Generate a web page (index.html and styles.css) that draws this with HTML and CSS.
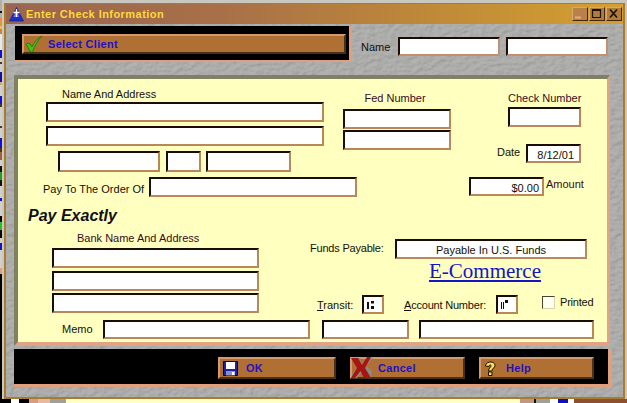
FILE: index.html
```html
<!DOCTYPE html>
<html lang="en">
<head>
<meta charset="utf-8">
<title>Enter Check Information</title>
<link rel="stylesheet" href="styles.css">
</head>
<body>
<div class="desk">
  <div class="window">
    <header class="titlebar">
      <svg class="title-icon" viewBox="0 0 15 15" width="15" height="15"><path d="M7.5 0.5 L14.5 14 H0.5 Z" fill="#1c30c8" stroke="#10106a" stroke-width=".6"/><path d="M7.5 2 L4.5 10 H10 Z" fill="#6a7cf0"/><path d="M7.5 2 V10 M4.5 5.5 H10.5" stroke="#fff" stroke-width="1.3" fill="none"/></svg>
      <span class="title-text">Enter Check Information</span>
      <div class="winctl">
        <span class="ctl ctl-min"><svg viewBox="0 0 15 13" width="15" height="13"><path d="M3 10.5 H9" stroke="#e8b070" stroke-width="2"/></svg></span>
        <span class="ctl"><svg viewBox="0 0 15 13" width="15" height="13"><path d="M3.5 2.5 H11.5 V10.5 H3.5 Z M3.5 3.5 H11.5" stroke="#1a1008" stroke-width="1.2" fill="none"/></svg></span>
        <span class="ctl ctl-close"><svg viewBox="0 0 15 13" width="15" height="13"><path d="M4 2.5 L11 10.5 M11 2.5 L4 10.5" stroke="#1a1008" stroke-width="1.6" fill="none"/></svg></span>
      </div>
    </header>
    <div class="content">
      <div class="toprow">
        <div class="selectbar">
          <button class="btn btn-select" type="button">
            <svg class="check" viewBox="0 0 18 18" width="18" height="18"><path d="M1 9 L4 8 L7 12 C9 7 13 3 17 1 C13 5 9.5 11 7.5 17 H5.5 Z" fill="#3fc60f" stroke="#1a6a08" stroke-width=".7"/></svg>
            <span>Select Client</span>
          </button>
        </div>
        <label class="label name-label">Name</label>
        <input class="field f-name" type="text">
        <input class="field f-name" type="text">
      </div>
      <main class="panel">
        <section class="block1">
          <div class="col-addr">
            <div class="label addr-label">Name And Address</div>
            <input class="field f-wide" type="text">
            <input class="field f-wide second" type="text">
            <div class="cityrow">
              <input class="field f-city" type="text">
              <input class="field f-state" type="text">
              <input class="field f-zip" type="text">
            </div>
          </div>
          <div class="col-fed">
            <div class="label maroon fed-label">Fed Number</div>
            <input class="field f-fed" type="text">
            <input class="field f-fed fed2" type="text">
          </div>
          <div class="col-check">
            <div class="label maroon check-label">Check Number</div>
            <input class="field f-check" type="text">
            <div class="daterow">
              <span class="label date-label">Date</span>
              <input class="field f-date" type="text" value="8/12/01">
            </div>
          </div>
        </section>
        <section class="payrow">
          <span class="label pay-label">Pay To The Order Of</span>
          <input class="field f-pay" type="text">
          <input class="field f-amount" type="text" value="$0.00">
          <span class="label maroon amount-label">Amount</span>
        </section>
        <h2 class="exact">Pay Exactly</h2>
        <section class="block4">
          <div class="col-bank">
            <div class="label maroon bank-label">Bank Name And Address</div>
            <input class="field f-bank" type="text">
            <input class="field f-bank b2" type="text">
            <input class="field f-bank b3" type="text">
          </div>
          <div class="col-funds">
            <div class="fundsrow">
              <span class="label tight">Funds Payable:</span>
              <input class="field f-funds" type="text" value="Payable In U.S. Funds">
            </div>
            <a class="ecom" href="#">E-Commerce</a>
            <div class="routerow">
              <span class="label transit-label"><u>T</u>ransit:</span>
              <span class="field micr"><svg viewBox="0 0 18 15" width="18" height="15"><path d="M4 5 H6 V12 H4 Z M8 4 H11 V6.500 H8 Z M8 9 H11 V12 H8 Z" fill="#111"/></svg></span>
              <span class="label acct-label tight"><u>A</u>ccount Number:</span>
              <span class="field micr"><svg viewBox="0 0 18 15" width="18" height="15"><path d="M4 5 H5 V12 H4 Z M6 5 H7 V12 H6 Z M8 3 H11 V6 H8 Z" fill="#111"/></svg></span>
              <span class="printed"><span class="box"></span><span class="label tight">Printed</span></span>
            </div>
          </div>
        </section>
        <section class="memorow">
          <span class="label memo-label">Memo</span>
          <input class="field f-memo" type="text">
          <input class="field f-memo2" type="text">
          <input class="field f-memo3" type="text">
        </section>
      </main>
      <footer class="actionbar">
        <button class="btn btn-ok" type="button">
          <svg viewBox="0 0 15 15" width="15" height="15"><path d="M0.500 0.500 H14.500 V14.500 H0.500 Z" fill="#2020a0" stroke="#000048"/><path d="M3 1 H12 V8 H3 Z" fill="#fff"/><path d="M3 10 H12 V14.500 H3 Z" fill="#8890c8"/><path d="M9 11 H11.500 V14 H9 Z" fill="#fff"/></svg>
          <span>OK</span>
        </button>
        <button class="btn btn-cancel" type="button">
          <svg viewBox="0 0 22 22" width="22" height="22"><path d="M6 21 L13 13 L20 21 L21 14 L15 9 L22 1 L15 2 L11 7 L9 1 L2 1 L7 10 L1 17 L1 21 Z" fill="#8a8a80"/><path d="M0 1 H7 L11 8 L16 0 H20 L14 11 L20 21 H13 L9.500 14 L4 21 H0 L6 11 Z" fill="#a81410"/></svg>
          <span>Cancel</span>
        </button>
        <button class="btn btn-help" type="button">
          <svg viewBox="0 0 12 15" width="12" height="15"><path d="M1.500 5 C1.500 0 11 -0.500 11 4.500 C11 7 8 7 8 10 H4.500 C4.500 6.500 7.500 6.500 7 4.500 C6.500 3.500 5 4 5 5.500 Z M4.500 11 H8 V14.500 H4.500 Z" fill="#f8e050" stroke="#1a1000" stroke-width="1"/></svg>
          <span>Help</span>
        </button>
      </footer>
    </div>
  </div>
</div>
</body>
</html>
```
FILE: styles.css
```css
* { box-sizing: border-box; }
html, body { margin: 0; padding: 0; }
body { width: 627px; height: 403px; overflow: hidden; background: #ffffc8; }
.desk {
  position: relative;
  width: 627px;
  height: 403px;
  padding: 3px 2px 4px 4px;
  font-family: "Liberation Sans", Arial, sans-serif;
  background:
    linear-gradient(to bottom,
      #b0b0a8 0 11px, #101010 11px 13px, #b0b0a8 13px 18px, #e89040 18px 26px, #f0c050 26px 29px, #d08040 29px 34px, #e8e8e8 34px 50px, #1010d0 50px 58px,
      #d0d0d0 58px 62px, #503020 62px 64px, #d0d0d0 64px 72px, #1010a0 72px 82px, #e0a080 82px 85px, #d0d0d0 85px 96px, #1010d0 96px 104px, #503020 104px 107px,
      #d0d0d0 107px 126px, #503020 126px 128px, #d0d0d0 128px 138px, #1010d0 138px 148px, #503020 148px 152px, #a06040 152px 160px, #d0d0d0 160px 166px, #101010 166px 172px, #20a020 172px 180px, #101010 180px 186px,
      #d0d0d0 186px 198px, #1010d0 198px 201px, #d0d0d0 201px 216px, #000 216px 222px, #20c020 222px 230px, #000 230px 238px, #d0d0d0 238px 243px,
      #1010d0 243px 250px, #d0d0d0 250px 268px, #e0a080 268px 274px, #000 274px 403px) left top / 2px 403px no-repeat,
    linear-gradient(to right,
      #000 0 11px, #fff 11px 19px, #000 19px 29px, #d89c80 29px 38px, #e8b8a0 38px 50px, #a0a098 50px 66px, #ffffc8 66px 520px,
      #c09880 520px 534px, #101010 534px 536px, #a0a098 536px 550px, #fff 550px 558px, #1010c0 558px 568px, #fff 568px 574px, #8c5030 574px 627px) left bottom / 627px 4px no-repeat,
    #c8c8c0;
}
.window {
  width: 621px;
  height: 396px;
  border: 2px solid #a87c30;
  border-top-width: 1px;
  display: flex;
  flex-direction: column;
}
.titlebar {
  height: 20px;
  flex: none;
  display: flex;
  align-items: center;
  padding: 0 1px 0 3px;
  background: linear-gradient(to right, #9a6650 0%, #a87048 35%, #c08a38 70%, #d4a030 100%);
}
.title-icon { flex: none; }
.title-text {
  margin-left: 2px;
  color: #ffd83c;
  font-size: 11px;
  font-weight: bold;
  letter-spacing: .45px;
  white-space: nowrap;
}
.winctl { margin-left: auto; display: flex; gap: 1px; }
.ctl {
  display: block;
  width: 16px;
  height: 14px;
  background: #b07c38;
  border: 1px solid;
  border-color: #d8a868 #402810 #402810 #d8a868;
  overflow: hidden;
}
.ctl svg { display: block; margin: -1px 0 0 -1px; }
.ctl-min { background: #b8804a; }
.content {
  flex: 1;
  padding: 2px 0 0 9px;
  background-color: #a6a6a4;
  background-image: url("data:image/svg+xml,%3Csvg xmlns='http://www.w3.org/2000/svg' width='240' height='240'%3E%3Cfilter id='n' x='0' y='0' width='100%25' height='100%25'%3E%3CfeTurbulence type='fractalNoise' baseFrequency='.14 .24' numOctaves='2' seed='4' stitchTiles='stitch'/%3E%3CfeDiffuseLighting surfaceScale='1.1' lighting-color='%23b4b4b2' diffuseConstant='1'%3E%3CfeDistantLight azimuth='225' elevation='66'/%3E%3C/feDiffuseLighting%3E%3C/filter%3E%3Crect width='240' height='240' filter='url(%23n)'/%3E%3C/svg%3E");
}
.label {
  font-size: 11px;
  line-height: 13px;
  color: #141008;
  white-space: nowrap;
}
.tight { letter-spacing: -.2px; }
.maroon { color: #3a0a20; }
.field {
  display: block;
  flex: none;
  height: 20px;
  margin: 0;
  padding: 2px 3px 0;
  background: #fff;
  border: 2px solid;
  border-color: #180c04 #b88858 #b88858 #180c04;
  border-radius: 0;
  outline: 0;
  font: 11px "Liberation Sans", Arial, sans-serif;
  color: #141008;
}
.btn {
  display: flex;
  align-items: center;
  margin: 0;
  padding: 0;
  background: #b07034;
  border: 2px solid;
  border-color: #d49a6c #4a3018 #4a3018 #d49a6c;
  font: bold 11px "Liberation Sans", Arial, sans-serif;
  letter-spacing: .3px;
  color: #2210c4;
  text-align: left;
}
.btn svg { flex: none; display: block; }
.toprow { display: flex; align-items: flex-start; height: 49px; }
.selectbar {
  width: 337px;
  height: 36px;
  padding: 8px 3px 6px 7px;
  background: #000;
  border-right: 3px solid #e0a080;
  border-bottom: 2px solid #e0a080;
}
.btn-select { width: 324px; height: 20px; padding-left: 1px; }
.btn-select span { margin-left: 5px; }
.check { margin-top: -1px; }
.name-label { width: 28px; margin: 15px 0 0 9px; }
.f-name { width: 102px; height: 19px; margin-top: 11px; border-color: #180c04 #c09070 #c09070 #180c04; }
.name-label + .f-name { margin-left: 9px; margin-right: 6px; }

.panel {
  width: 596px;
  height: 271px;
  margin-left: -1px;
  background: #ffffc0;
  border-style: solid;
  border-width: 4px 3px 4px 4px;
  border-color: #808062 #e2a284 #e2a284 #808062;
}
.block1 { display: flex; height: 93px; }
.col-addr { width: 278px; margin-left: 28px; padding-top: 9px; }
.addr-label { margin: 0 0 1px 16px; }
.f-wide { width: 278px; }
.second { margin-top: 4px; }
.cityrow { display: flex; margin: 5px 0 0 12px; }
.cityrow .field { height: 21px; }
.f-city { width: 102px; }
.f-state { width: 35px; margin-left: 6px; }
.f-zip { width: 85px; margin-left: 5px; }
.col-fed { width: 108px; margin-left: 19px; padding-top: 13px; }
.fed-label { text-align: center; margin-bottom: 4px; margin-left: -4px; }
.f-fed { width: 108px; }
.fed2 { margin-top: 1px; }
.col-check { width: 84px; margin-left: 46px; padding-top: 13px; display: flex; flex-direction: column; align-items: flex-end; }
.check-label { width: 73px; margin-bottom: 2px; }
.f-check { width: 73px; }
.daterow { display: flex; align-items: center; gap: 6px; margin-top: 17px; width: 84px; }
.date-label { margin-bottom: 2px; width: 23px; }
.f-date { width: 55px; height: 19px; text-align: right; padding-right: 5px; }

.payrow { display: flex; align-items: flex-start; margin-top: 5px; height: 20px; padding-left: 25px; }
.pay-label { width: 106px; padding-top: 6px; }
.f-pay { width: 208px; }
.f-amount { width: 75px; height: 19px; margin-left: 112px; text-align: right; padding-right: 3px; }
.amount-label { margin: 1px 0 0 2px; }

.exact { margin: 9px 0 0 10px; height: 22px; font-size: 16px; line-height: 20px; font-weight: bold; font-style: italic; color: #101010; }
.block4 { display: flex; height: 82px; margin-top: 3px; }
.col-bank { width: 207px; margin-left: 34px; }
.bank-label { margin: 1px 0 3px 25px; }
.f-bank { width: 207px; }
.b2 { margin-top: 3px; }
.b3 { margin-top: 2px; }
.col-funds { margin: 8px 0 0 51px; width: 290px; display: flex; flex-direction: column; }
.fundsrow { display: flex; align-items: flex-start; }
.fundsrow .label { width: 85px; padding-top: 3px; }
.f-funds { width: 192px; text-align: center; }
.ecom {
  display: block;
  margin: 1px 0 0 119px;
  font: 21px/23px "Liberation Serif", "Times New Roman", serif;
  color: #1414c8;
  white-space: nowrap;
}
.routerow { display: flex; align-items: flex-start; height: 21px; margin-top: 12px; }
.transit-label { margin: 4px 0 0 7px; width: 45px; }
.micr { width: 22px; height: 19px; padding: 0; }
.micr svg { display: block; margin-left: -1px; }
.acct-label { margin: 4px 0 0 20px; width: 92px; }
.printed { display: flex; align-items: center; margin: 1px 0 0 24px; }
.box { display: block; width: 13px; height: 13px; background: #fffff0; border: 1px solid; border-color: #504030 #e0d0b0 #e0d0b0 #504030; margin-right: 5px; }

.memorow { display: flex; align-items: flex-start; margin-top: 7px; padding-left: 44px; }
.memo-label { width: 41px; padding-top: 3px; }
.memorow .field { height: 19px; }
.f-memo { width: 207px; }
.f-memo2 { width: 87px; margin-left: 12px; }
.f-memo3 { width: 175px; margin-left: 10px; }

.actionbar {
  width: 598px;
  height: 38px;
  margin: 3px 0 0 -1px;
  padding: 8px 14px 0 0;
  display: flex;
  justify-content: flex-end;
  align-items: flex-start;
  gap: 14px;
  background: #000;
  border-right: 4px solid #e0a080;
  border-bottom: 3px solid #e0a080;
}
.actionbar .btn { height: 22px; width: 115px; }
.btn-ok { width: 118px !important; padding-left: 3px; }
.btn-ok span { margin-left: 8px; }
.btn-cancel { padding-left: 0; }
.btn-cancel svg { margin-left: -1px; }
.btn-cancel span { margin-left: 5px; }
.btn-help { padding-left: 3px; }
.btn-help span { margin-left: 10px; }
```
